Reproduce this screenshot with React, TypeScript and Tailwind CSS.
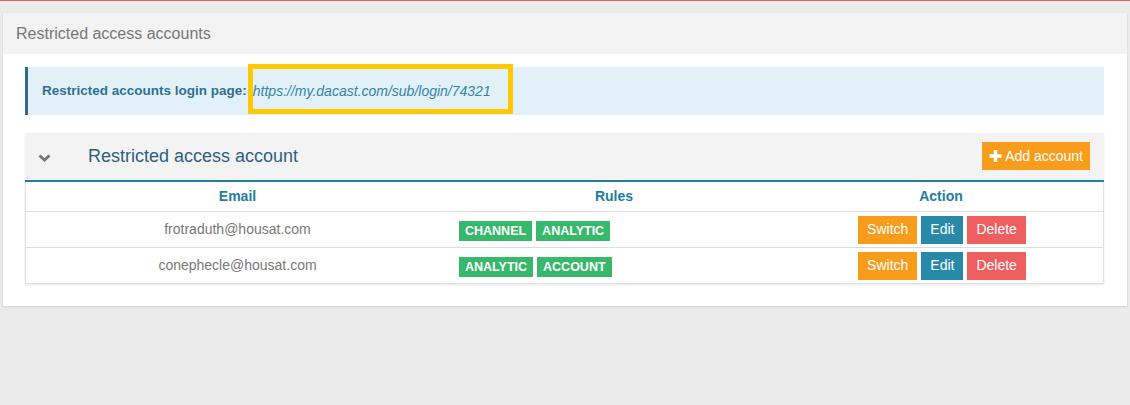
import React from "react";

const rows = [
  { email: "frotraduth@housat.com", rules: ["CHANNEL", "ANALYTIC"] },
  { email: "conephecle@housat.com", rules: ["ANALYTIC", "ACCOUNT"] },
];

export default function App() {
  return (
    <div
      className="w-[1130px] h-[405px] bg-[#ebebeb] overflow-hidden"
      style={{ fontFamily: '"Liberation Sans", Arial, sans-serif' }}
    >
      <div className="h-px bg-[#f05a5a]" />
      <div className="pt-[12px] pl-[3px] pr-[3px]">
        <div className="bg-white shadow-[0_1px_2px_rgba(0,0,0,0.12)]">
          <div className="h-[41px] bg-[#f3f3f3] flex items-center px-[13px] text-[16px] text-[#777]">
            Restricted access accounts
          </div>
          <div className="pt-[13px] pb-[22px] pl-[22px] pr-[23px]">
            {/* info box */}
            <div className="relative h-[48px] bg-[#e2f1f8] border-l-[3px] border-[#2f6b8a] flex items-center pl-[14px]">
              <span className="font-bold text-[13.5px] text-[#31708f]">
                Restricted accounts login page:
              </span>
              <span className="italic text-[14px] text-[#3584a8] ml-[6px]">
                https://my.dacast.com/sub/login/74321
              </span>
              <div className="absolute left-[220px] top-[-3px] w-[265px] h-[50px] border-[5px] border-[#ffc800]" />
            </div>

            {/* section */}
            <div className="mt-[18px] shadow-[0_1px_2px_rgba(0,0,0,0.1)]">
              <div className="h-[47px] bg-[#f3f3f3] flex items-center pl-[13px] pr-[14px]">
                <svg width="13" height="8" viewBox="0 0 13 8" className="mt-[2px]">
                  <polyline
                    points="1.5,1.5 6.5,6 11.5,1.5"
                    fill="none"
                    stroke="#777"
                    strokeWidth="3"
                  />
                </svg>
                <span className="ml-[37px] text-[18px] text-[#2f5f7f] mb-[1px]">
                  Restricted access account
                </span>
                <button className="ml-auto h-[28px] bg-[#f89c1c] text-white text-[14px] flex items-center pl-[7px] pr-[7px] mb-[1px]">
                  <svg width="13" height="12" viewBox="0 0 13 12" className="mr-[3px]">
                    <rect x="4.75" y="0" width="3.5" height="12" fill="#fff" />
                    <rect x="0.5" y="4.25" width="12" height="3.5" fill="#fff" />
                  </svg>
                  Add account
                </button>
              </div>
              <div className="h-[2px] bg-[#1f7f9f]" />
              <div className="border-l border-r border-b border-[#e2e2e2]">
                <div className="grid grid-cols-[423px_330px_1fr] h-[29px] items-center text-[14px] font-bold text-[#1e7ea2]">
                  <div className="text-center">Email</div>
                  <div className="text-center">Rules</div>
                  <div className="text-center">Action</div>
                </div>
                {rows.map((r) => (
                  <div
                    key={r.email}
                    className="grid grid-cols-[423px_330px_1fr] h-[36px] items-center border-t border-[#dcdcdc]"
                  >
                    <div className="text-center text-[14px] text-[#777]">{r.email}</div>
                    <div className="flex gap-[4px] pl-[10px] pt-[2px]">
                      {r.rules.map((b) => (
                        <span
                          key={b}
                          className="h-[20px] px-[6px] bg-[#37b86a] text-white font-bold text-[12.5px] leading-[20px]"
                        >
                          {b}
                        </span>
                      ))}
                    </div>
                    <div className="flex justify-center gap-[4px] pl-[2px]">
                      <button className="h-[28px] px-[9px] bg-[#f89c1c] text-white text-[14px]">
                        Switch
                      </button>
                      <button className="h-[28px] px-[9px] bg-[#2788a8] text-white text-[14px]">
                        Edit
                      </button>
                      <button className="h-[28px] px-[9px] bg-[#ef5f5f] text-white text-[14px]">
                        Delete
                      </button>
                    </div>
                  </div>
                ))}
              </div>
            </div>
          </div>
        </div>
      </div>
    </div>
  );
}
